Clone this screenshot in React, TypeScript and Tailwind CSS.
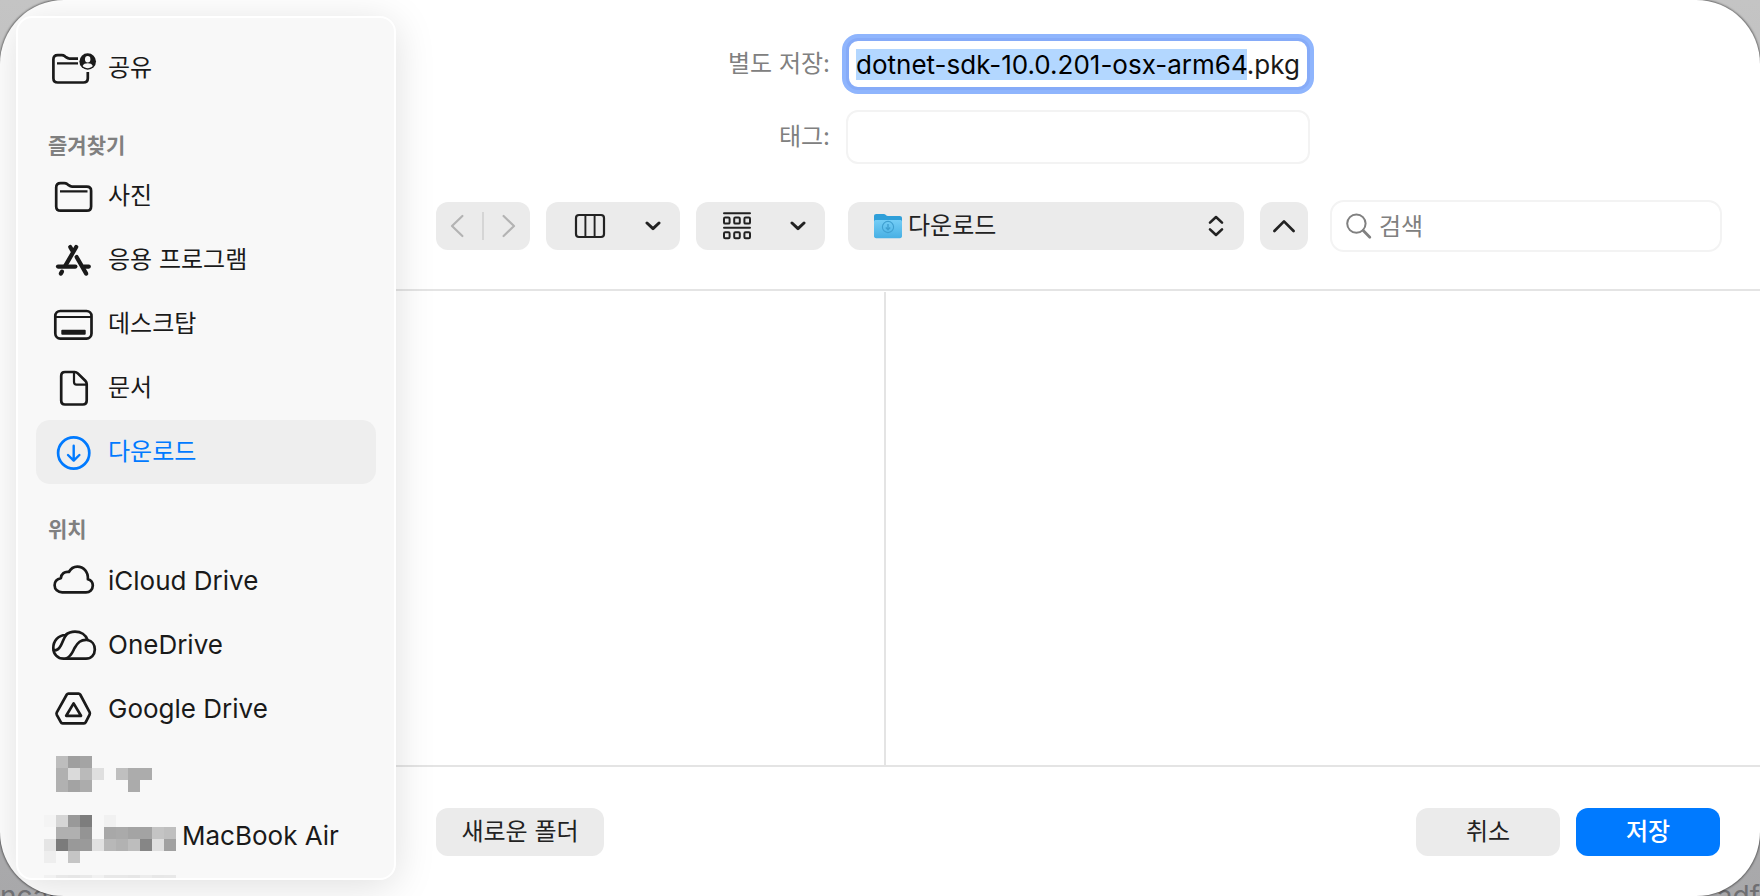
import { useEffect, useRef } from "react";
import type { ReactNode } from "react";
import clsx from "clsx";

const BASE_NAME = "dotnet-sdk-10.0.201-osx-arm64";

function Glyph({ children }: { children: ReactNode }) {
  return (
    <svg
      viewBox="0 0 44 44"
      className="size-11 shrink-0 overflow-visible"
      fill="none"
      stroke="currentColor"
      strokeWidth="2.7"
      strokeLinecap="round"
      strokeLinejoin="round"
      aria-hidden
    >
      {children}
    </svg>
  );
}

const icons = {
  shared: (
    <Glyph>
      <path
        strokeLinecap="butt"
        d="M27 12.6H18.5C17 12.6 16.2 12.1 15 11.2L13.8 10.2C12.8 9.5 12.1 9.2 10.8 9.2H6.8C3.8 9.2 2.4 10.6 2.4 13.6V32.2C2.4 35.2 3.8 36.5 6.8 36.5H32.4C35.4 36.5 36.8 35.2 36.8 32.2V26"
      />
      <path d="M6 17.3H27" strokeWidth="2.2" strokeLinecap="butt" />
      <circle cx="36.7" cy="15.5" r="8.3" fill="currentColor" stroke="none" />
      <ellipse cx="36.7" cy="13.2" rx="2.7" ry="3.2" fill="#f8f8f8" stroke="none" />
      <path d="M31.6 20.1C32.4 17.9 34.4 17.2 36.7 17.2S41 17.9 41.8 20.1C40.4 21.5 38.7 22.2 36.7 22.2S33 21.5 31.6 20.1Z" fill="#f8f8f8" stroke="none" />
    </Glyph>
  ),
  folder: (
    <Glyph>
      <path d="M9.6 9.1H13.2C14.6 9.1 15.3 9.4 16.4 10.2L17.6 11.2C18.8 12.1 19.5 12.6 21 12.6H35.8C38.8 12.6 40.1 14 40.1 16.8V32.4C40.1 35.4 38.8 36.7 35.8 36.7H9.6C6.6 36.7 5.2 35.4 5.2 32.4V13.5C5.2 10.5 6.6 9.1 9.6 9.1Z" />
      <path d="M9 17.3H36.5" strokeWidth="2.2" strokeLinecap="butt" />
    </Glyph>
  ),
  apps: (
    <Glyph>
      <g strokeWidth="4.2">
        <path d="M25.2 9L14.4 27.6" />
        <path d="M19.2 9L21.2 12.4" />
        <path d="M7 28.6H24.4" />
        <path d="M33 28.6H37.8" />
        <path d="M11 33.6L9.8 35.6" />
        <path d="M25.6 19L35.2 35.6" />
      </g>
    </Glyph>
  ),
  desktop: (
    <Glyph>
      <rect x="4.3" y="9" width="36.2" height="27.6" rx="5" />
      <path d="M5 15H40" strokeWidth="1.8" />
      <rect x="10.3" y="27.7" width="24.4" height="5" rx="1" fill="currentColor" stroke="none" />
    </Glyph>
  ),
  document: (
    <Glyph>
      <path d="M14 6H23.6C25 6 25.8 6.4 26.8 7.4L34.3 14.8C35.3 15.8 35.7 16.6 35.7 18V34.6C35.7 37.2 34.4 38.5 31.8 38.5H14C11.4 38.5 10.2 37.2 10.2 34.6V9.9C10.2 7.2 11.4 6 14 6Z" />
      <path d="M23 6.5V16C23 17.8 23.9 18.6 25.6 18.6H35.2" strokeWidth="2.2" />
    </Glyph>
  ),
  downloads: (
    <Glyph>
      <circle cx="22.7" cy="23" r="15.6" />
      <path d="M22.7 15.8V30.4M17 25L22.7 30.6L28.4 25" strokeWidth="2.4" />
    </Glyph>
  ),
  icloud: (
    <Glyph>
      <path d="M11.2 34.4C6.8 34.4 3.6 31.2 3.6 27.2C3.6 23.6 6 21 9.9 20.2C10.2 15.8 13.6 13.2 17.9 14C19.6 10.8 22.6 8.6 26.3 8.6C32.6 8.6 37.3 13.6 36.9 21.2C39.9 22 41.8 24.5 41.8 27.6C41.8 31.4 38.8 34.4 35 34.4Z" />
    </Glyph>
  ),
  onedrive: (
    <Glyph>
      <path d="M12.6 36.7C6.6 36.7 2.3 32 2.3 26C2.3 19 7.2 13.2 14.6 13C17 10.9 20.4 9.6 24 9.6C29.8 9.6 34.8 12.8 36.6 18C41 18.8 43.8 22.8 43.8 27.4C43.8 32.8 40.2 36.7 35 36.7Z" />
      <path d="M36.6 18C29.6 17.4 26.6 20.6 23.6 26C21.4 30.4 20.2 34.6 15.2 36.4" />
      <path d="M15.8 12.2C12.8 15.6 12 19.6 9.8 23.6C8.2 26.6 5.6 28.6 2.8 28.4" />
    </Glyph>
  ),
  gdrive: (
    <Glyph>
      <path d="M17.4 7.6H27.6C28.3 7.6 28.8 7.9 29.2 8.5L38.6 26.2C39 27 39 27.8 38.6 28.6L34.8 36.2C34.4 37 33.8 37.3 33 37.3H11.6C10.8 37.3 10.2 37 9.8 36.2L5.8 28.8C5.4 28 5.4 27.2 5.8 26.4L15.8 8.5C16.2 7.9 16.7 7.6 17.4 7.6Z" />
      <path d="M22.6 17.4L30 29.8H15.2Z" />
    </Glyph>
  ),
};

type IconName = keyof typeof icons;

// 12px 모자이크 블록: 행마다 [열, 색]
type Block = [number, string];

function Mosaic({ rows, cols }: { rows: Block[][]; cols: number }) {
  return (
    <svg
      width={cols * 12}
      height={rows.length * 12}
      className="shrink-0"
      shapeRendering="crispEdges"
      aria-hidden
    >
      {rows.map((row, y) =>
        row.map(([x, color]) => (
          <rect key={`${x}-${y}`} x={x * 12} y={y * 12} width="12" height="12" fill={color} />
        )),
      )}
    </svg>
  );
}

const hiddenDrive: Block[][] = [
  [[1, "#bdbdbd"], [2, "#9f9f9f"], [3, "#a4a4a4"]],
  [[1, "#b0b0b0"], [2, "#dadada"], [3, "#bababa"], [4, "#dfdfdf"], [6, "#bfbfbf"], [7, "#acacac"], [8, "#acacac"]],
  [[1, "#b1b1b1"], [2, "#a3a3a3"], [3, "#acacac"], [7, "#ababab"]],
];

const hiddenOwner: Block[][] = [
  [[0, "#f4f4f4"], [1, "#d6d6d6"], [2, "#999999"], [3, "#7d7d7d"], [5, "#f1f1f1"]],
  [[1, "#b0b0b0"], [2, "#b0b0b0"], [3, "#949494"], [5, "#a8a8a8"], [6, "#aaaaaa"], [7, "#a4a4a4"], [8, "#a3a3a3"], [9, "#c4c4c4"], [10, "#bfbfbf"]],
  [[0, "#e5e5e5"], [1, "#7b7b7b"], [2, "#999999"], [3, "#9a9a9a"], [4, "#e1e1e1"], [5, "#b8b8b8"], [6, "#b2b2b2"], [7, "#bdbdbd"], [8, "#868686"], [9, "#dfdfdf"], [10, "#a1a1a1"]],
  [[0, "#eeeeee"], [2, "#c5c5c5"]],
];

const hiddenNext: Block[][] = [
  [[0, "#f1f1f1"], [1, "#e8e8e8"], [2, "#e6e6e6"], [3, "#e9e9e9"], [4, "#f1f1f1"], [5, "#e8e8e8"], [6, "#e8e8e8"], [7, "#e6e6e6"], [8, "#ececec"], [9, "#e7e7e7"], [10, "#e8e8e8"]],
];

function SidebarItem({ icon, label, active, latin }: { icon: IconName; label: string; active?: boolean; latin?: boolean }) {
  return (
    <li>
      <button
        type="button"
        aria-current={active ? "true" : undefined}
        className={clsx(
          "flex h-16 w-full items-center gap-[13px] rounded-[14px] px-[15px] text-left",
          active ? "bg-[#eeeeee] text-[#007aff]" : "text-[#1a1a1a]",
          latin && "text-[26px]",
        )}
      >
        {icons[icon]}
        <span>{label}</span>
      </button>
    </li>
  );
}

function SidebarHeading({ children }: { children: ReactNode }) {
  return (
    <h2 className="flex h-16 items-center px-3 pt-7 text-[21px] font-bold text-[#808080]">
      {children}
    </h2>
  );
}

function Sidebar() {
  return (
    <aside className="relative z-10 my-4 ml-4 w-[380px] shrink-0 overflow-hidden rounded-[16px] border-2 border-white bg-[#f8f8f8] px-[18px] pt-[18px] text-[24px] shadow-[0_6px_40px_rgba(0,0,0,0.13)]">
      <ul>
        <SidebarItem icon="shared" label="공유" />
      </ul>
      <SidebarHeading>즐겨찾기</SidebarHeading>
      <ul>
        <SidebarItem icon="folder" label="사진" />
        <SidebarItem icon="apps" label="응용 프로그램" />
        <SidebarItem icon="desktop" label="데스크탑" />
        <SidebarItem icon="document" label="문서" />
        <SidebarItem icon="downloads" label="다운로드" active />
      </ul>
      <SidebarHeading>위치</SidebarHeading>
      <ul>
        <SidebarItem icon="icloud" label="iCloud Drive" latin />
        <SidebarItem icon="onedrive" label="OneDrive" latin />
        <SidebarItem icon="gdrive" label="Google Drive" latin />
        <li className="flex h-16 items-start px-2 pt-4">
          <Mosaic rows={hiddenDrive} cols={9} />
        </li>
        <li className="flex h-16 items-start gap-[6px] px-2 pt-[11px] text-[26px] text-[#1a1a1a]">
          <Mosaic rows={hiddenOwner} cols={11} />
          <span className="leading-[42px]">MacBook Air</span>
        </li>
        <li className="flex h-16 items-start px-2 pt-[7px]">
          <Mosaic rows={hiddenNext} cols={11} />
        </li>
      </ul>
    </aside>
  );
}

function FileNameForm() {
  const nameRef = useRef<HTMLInputElement>(null);

  // 확장자를 뺀 파일 이름만 선택
  useEffect(() => {
    nameRef.current?.focus();
    nameRef.current?.setSelectionRange(0, BASE_NAME.length);
  }, []);

  return (
    <div className="grid grid-cols-[1fr_464px_1fr] items-center gap-x-4 gap-y-5 pt-[38px] text-[24px]">
      <label htmlFor="file-name" className="text-right text-[#808080]">별도 저장:</label>
      <input
        id="file-name"
        ref={nameRef}
        type="text"
        spellCheck={false}
        defaultValue={`${BASE_NAME}.pkg`}
        className="h-[52px] rounded-[12px] border-[3px] border-[#86abf8] bg-white px-[7px] text-[26px] text-[#1a1a1a] ring-4 ring-[#8fb5fd] outline-none selection:bg-[#b3d7ff] selection:text-black"
      />
      <span />
      <label htmlFor="tags" className="text-right text-[#808080]">태그:</label>
      <input id="tags" type="text" className="h-[54px] rounded-[12px] border-2 border-[#f3f3f3] bg-white px-2 outline-none" />
      <span />
    </div>
  );
}

function ChevronDown() {
  return (
    <svg viewBox="0 0 16 10" className="h-[10px] w-4" fill="none" stroke="#222" strokeWidth="3" strokeLinecap="round" strokeLinejoin="round" aria-hidden>
      <path d="M2 2L8 7.6L14 2" />
    </svg>
  );
}

function DownloadsFolder() {
  return (
    <svg viewBox="0 0 30 28" className="h-7 w-[30px]" aria-hidden>
      <defs>
        <linearGradient id="folder-front" x1="0" y1="0" x2="0" y2="1">
          <stop offset="0" stopColor="#74cdf6" />
          <stop offset="1" stopColor="#47b0e4" />
        </linearGradient>
      </defs>
      <path d="M1 4.4C1 2.8 1.8 2 3.4 2H10.6C12.8 2 13 4 15 4H26.6C28.2 4 29 4.8 29 6.4V12H1Z" fill="#2f9fd9" />
      <path d="M1 10C1 8.6 1.8 8 3 8H27C28.2 8 29 8.6 29 10V24C29 25.4 28.2 26.2 26.8 26.2H3.2C1.8 26.2 1 25.4 1 24Z" fill="url(#folder-front)" />
      <circle cx="15" cy="15" r="5.6" fill="none" stroke="#3f9fd0" strokeWidth="1.1" />
      <path d="M15 12V17.6M12.8 15.6L15 17.8L17.2 15.6" fill="none" stroke="#3f9fd0" strokeWidth="1.4" />
    </svg>
  );
}

function Toolbar() {
  return (
    <div className="flex items-center gap-4 pt-9 pr-[38px] pb-[37px] pl-10">
      <div className="flex h-12 w-[94px] shrink-0 items-center justify-between rounded-[12px] bg-[#ebebeb] px-[14px]">
        <button type="button" aria-label="뒤로" disabled>
          <svg viewBox="0 0 14 24" className="h-6 w-[14px]" fill="none" stroke="#b3b3b3" strokeWidth="2.2" strokeLinecap="round" strokeLinejoin="round">
            <path d="M12.4 2L2 12L12.4 22" />
          </svg>
        </button>
        <span className="h-7 w-[2px] bg-[#d5d5d5]" />
        <button type="button" aria-label="앞으로" disabled>
          <svg viewBox="0 0 14 24" className="h-6 w-[14px]" fill="none" stroke="#b3b3b3" strokeWidth="2.2" strokeLinecap="round" strokeLinejoin="round">
            <path d="M1.6 2L12 12L1.6 22" />
          </svg>
        </button>
      </div>
      <button type="button" aria-label="계층 보기" className="flex h-12 w-[134px] shrink-0 items-center justify-between rounded-[12px] bg-[#ebebeb] pr-[19px] pl-7">
        <svg viewBox="0 0 32 26" className="h-[26px] w-8" fill="none" stroke="#222" aria-hidden>
          <rect x="2" y="2" width="28" height="22" rx="3" strokeWidth="2.2" />
          <path d="M11.4 2.5V23.5M20.6 2.5V23.5" strokeWidth="1.9" />
        </svg>
        <ChevronDown />
      </button>
      <button type="button" aria-label="그룹화" className="flex h-12 w-[129px] shrink-0 items-center justify-between rounded-[12px] bg-[#ebebeb] pr-[19px] pl-[26px]">
        <svg viewBox="0 0 30 30" className="size-[30px]" fill="none" stroke="#222" strokeWidth="2" aria-hidden>
          <path d="M2 2.2H28M2 16.8H28" strokeLinecap="round" />
          <rect x="2" y="6.6" width="5.6" height="6" rx="1.2" />
          <rect x="12.2" y="6.6" width="5.6" height="6" rx="1.2" />
          <rect x="22.4" y="6.6" width="5.6" height="6" rx="1.2" />
          <rect x="2" y="21.2" width="5.6" height="6" rx="1.2" />
          <rect x="12.2" y="21.2" width="5.6" height="6" rx="1.2" />
          <rect x="22.4" y="21.2" width="5.6" height="6" rx="1.2" />
        </svg>
        <ChevronDown />
      </button>
      <div className="relative ml-[7px] flex-1">
        <select
          aria-label="위치"
          className="h-12 w-full appearance-none rounded-[12px] bg-[#ebebeb] pr-12 pl-[60px] text-[24px] text-[#222] outline-none"
        >
          <option>다운로드</option>
        </select>
        <span className="pointer-events-none absolute inset-y-0 left-[25px] flex items-center">
          <DownloadsFolder />
        </span>
        <span className="pointer-events-none absolute inset-y-0 right-[19px] flex items-center">
          <svg viewBox="0 0 18 24" className="h-6 w-[18px]" fill="none" stroke="#222" strokeWidth="2.6" strokeLinecap="round" strokeLinejoin="round" aria-hidden>
            <path d="M3 8.6L9 3L15 8.6M3 15.4L9 21L15 15.4" />
          </svg>
        </span>
      </div>
      <button type="button" aria-label="축소" className="flex size-12 shrink-0 items-center justify-center rounded-[12px] bg-[#ebebeb]">
        <svg viewBox="0 0 24 16" className="h-4 w-6" fill="none" stroke="#222" strokeWidth="2.7" strokeLinecap="round" strokeLinejoin="round" aria-hidden>
          <path d="M2.4 13L12 3.4L21.6 13" />
        </svg>
      </button>
      <div className="relative ml-[6px] w-[392px] shrink-0">
        <input
          type="search"
          aria-label="검색"
          placeholder="검색"
          className="h-[52px] w-full rounded-[14px] border-2 border-[#f3f3f3] bg-white pr-3 pl-[47px] text-[24px] outline-none placeholder:text-[#808080]"
        />
        <span className="pointer-events-none absolute inset-y-0 left-[15px] flex items-center">
          <svg viewBox="0 0 28 28" className="size-7" fill="none" stroke="#808080" aria-hidden>
            <circle cx="11.4" cy="11.6" r="9.2" strokeWidth="2" />
            <path d="M18.2 18.6L24.8 25.2" strokeWidth="2.8" strokeLinecap="round" />
          </svg>
        </span>
      </div>
    </div>
  );
}

export default function App() {
  return (
    <div className="relative h-screen overflow-hidden bg-linear-to-b from-[#c4c4c4] to-[#a8a8aa] font-['Inter','Noto_Sans_CJK_KR',sans-serif]">
      {/* 시트 뒤로 비치는 페이지 글자 */}
      <div className="absolute inset-x-0 bottom-0 flex h-4 justify-between text-[28px] leading-8 text-[#6f6f72]" aria-hidden>
        <span>ncac</span>
        <span>adf</span>
      </div>

      <div role="dialog" aria-label="별도 저장" className="relative flex h-full overflow-hidden rounded-[64px] bg-white shadow-[0_0_2px_1px_rgba(0,0,0,0.45)]">
        <Sidebar />
        <main className="flex min-w-0 flex-1 flex-col">
          <FileNameForm />
          <Toolbar />
          <div className="flex flex-1 border-y-2 border-[#e4e4e4] pt-px">
            <div className="w-[490px] border-r-2 border-[#e4e4e4]" />
            <div className="flex-1" />
          </div>
          <footer className="flex items-center gap-4 px-10 pt-[41px] pb-10 text-[24px]">
            <button type="button" className="mr-auto h-12 w-[168px] rounded-[12px] bg-[#ebebeb] text-[#222]">새로운 폴더</button>
            <button type="button" className="h-12 w-36 rounded-[12px] bg-[#ebebeb] text-[#222]">취소</button>
            <button type="button" className="h-12 w-36 rounded-[12px] bg-[#007aff] font-medium text-white">저장</button>
          </footer>
        </main>
      </div>
    </div>
  );
}
